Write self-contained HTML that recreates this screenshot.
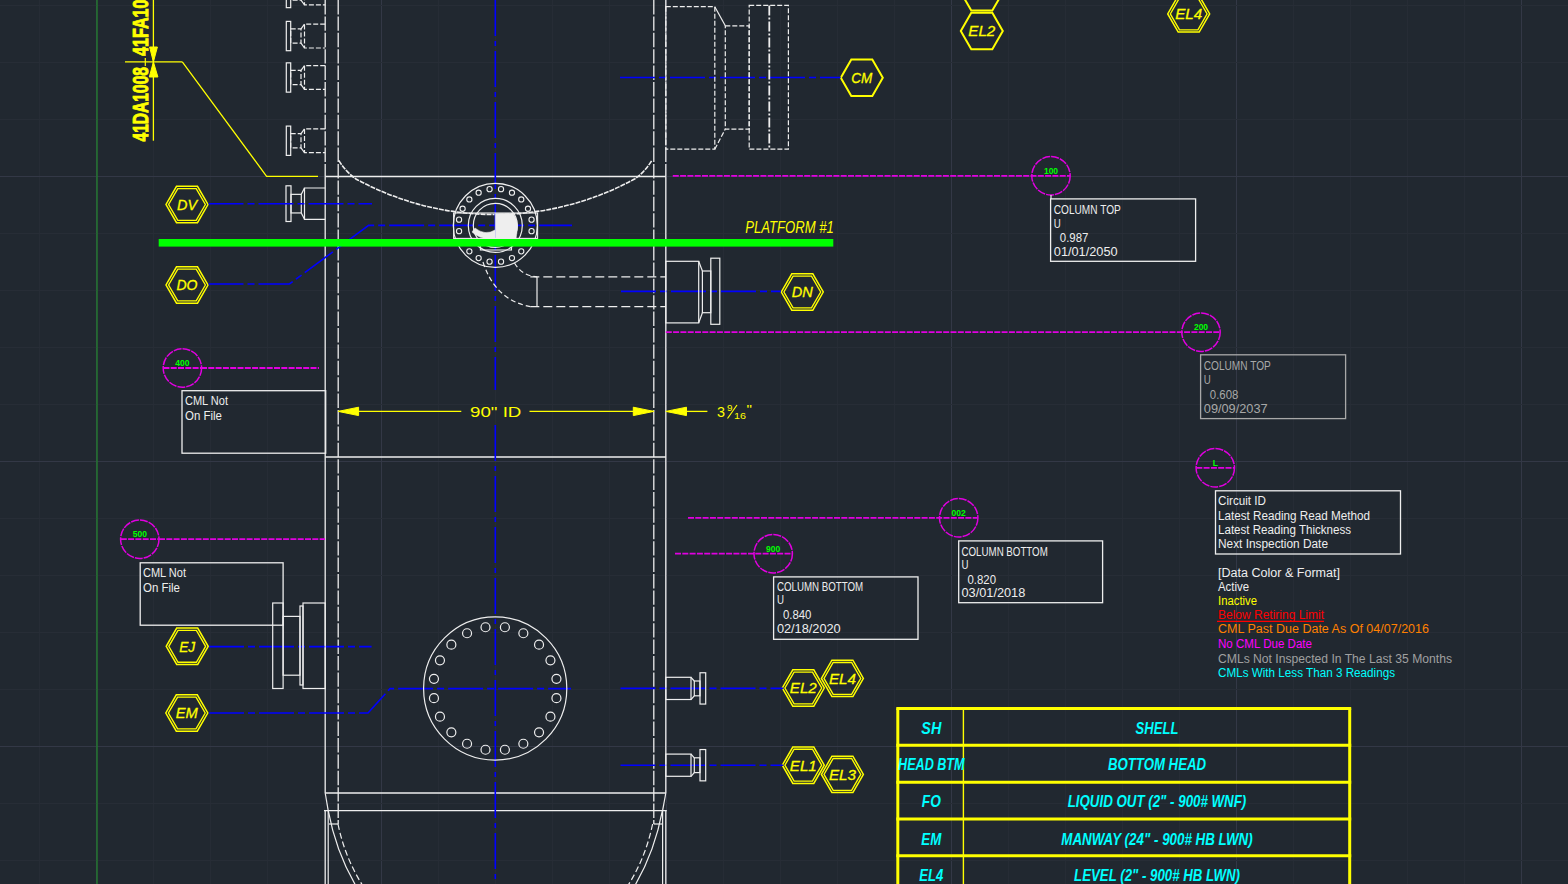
<!DOCTYPE html>
<html><head><meta charset="utf-8"><style>
html,body{margin:0;padding:0;background:#212830;width:1568px;height:884px;overflow:hidden}
</style></head><body>
<svg width="1568" height="884" viewBox="0 0 1568 884" style="display:block">
<rect width="1568" height="884" fill="#212830"/>
<line x1="39.5" y1="0" x2="39.5" y2="884" stroke="#262c35" stroke-width="1" />
<line x1="96.5" y1="0" x2="96.5" y2="884" stroke="#333846" stroke-width="1" />
<line x1="153.5" y1="0" x2="153.5" y2="884" stroke="#262c35" stroke-width="1" />
<line x1="210.5" y1="0" x2="210.5" y2="884" stroke="#262c35" stroke-width="1" />
<line x1="267.5" y1="0" x2="267.5" y2="884" stroke="#262c35" stroke-width="1" />
<line x1="324.5" y1="0" x2="324.5" y2="884" stroke="#262c35" stroke-width="1" />
<line x1="381.5" y1="0" x2="381.5" y2="884" stroke="#333846" stroke-width="1" />
<line x1="438.5" y1="0" x2="438.5" y2="884" stroke="#262c35" stroke-width="1" />
<line x1="495.5" y1="0" x2="495.5" y2="884" stroke="#262c35" stroke-width="1" />
<line x1="552.5" y1="0" x2="552.5" y2="884" stroke="#262c35" stroke-width="1" />
<line x1="609.5" y1="0" x2="609.5" y2="884" stroke="#262c35" stroke-width="1" />
<line x1="666.5" y1="0" x2="666.5" y2="884" stroke="#333846" stroke-width="1" />
<line x1="723.5" y1="0" x2="723.5" y2="884" stroke="#262c35" stroke-width="1" />
<line x1="780.5" y1="0" x2="780.5" y2="884" stroke="#262c35" stroke-width="1" />
<line x1="837.5" y1="0" x2="837.5" y2="884" stroke="#262c35" stroke-width="1" />
<line x1="894.5" y1="0" x2="894.5" y2="884" stroke="#262c35" stroke-width="1" />
<line x1="951.5" y1="0" x2="951.5" y2="884" stroke="#333846" stroke-width="1" />
<line x1="1008.5" y1="0" x2="1008.5" y2="884" stroke="#262c35" stroke-width="1" />
<line x1="1065.5" y1="0" x2="1065.5" y2="884" stroke="#262c35" stroke-width="1" />
<line x1="1122.5" y1="0" x2="1122.5" y2="884" stroke="#262c35" stroke-width="1" />
<line x1="1179.5" y1="0" x2="1179.5" y2="884" stroke="#262c35" stroke-width="1" />
<line x1="1236.5" y1="0" x2="1236.5" y2="884" stroke="#333846" stroke-width="1" />
<line x1="1293.5" y1="0" x2="1293.5" y2="884" stroke="#262c35" stroke-width="1" />
<line x1="1350.5" y1="0" x2="1350.5" y2="884" stroke="#262c35" stroke-width="1" />
<line x1="1407.5" y1="0" x2="1407.5" y2="884" stroke="#262c35" stroke-width="1" />
<line x1="1464.5" y1="0" x2="1464.5" y2="884" stroke="#262c35" stroke-width="1" />
<line x1="1521.5" y1="0" x2="1521.5" y2="884" stroke="#333846" stroke-width="1" />
<line x1="0" y1="5.5" x2="1568" y2="5.5" stroke="#272d36" stroke-width="1" />
<line x1="0" y1="62.5" x2="1568" y2="62.5" stroke="#272d36" stroke-width="1" />
<line x1="0" y1="119.5" x2="1568" y2="119.5" stroke="#272d36" stroke-width="1" />
<line x1="0" y1="176.5" x2="1568" y2="176.5" stroke="#333846" stroke-width="1" />
<line x1="0" y1="233.5" x2="1568" y2="233.5" stroke="#272d36" stroke-width="1" />
<line x1="0" y1="290.5" x2="1568" y2="290.5" stroke="#272d36" stroke-width="1" />
<line x1="0" y1="347.5" x2="1568" y2="347.5" stroke="#272d36" stroke-width="1" />
<line x1="0" y1="404.5" x2="1568" y2="404.5" stroke="#272d36" stroke-width="1" />
<line x1="0" y1="461.5" x2="1568" y2="461.5" stroke="#333846" stroke-width="1" />
<line x1="0" y1="518.5" x2="1568" y2="518.5" stroke="#272d36" stroke-width="1" />
<line x1="0" y1="575.5" x2="1568" y2="575.5" stroke="#272d36" stroke-width="1" />
<line x1="0" y1="632.5" x2="1568" y2="632.5" stroke="#272d36" stroke-width="1" />
<line x1="0" y1="689.5" x2="1568" y2="689.5" stroke="#272d36" stroke-width="1" />
<line x1="0" y1="746.5" x2="1568" y2="746.5" stroke="#333846" stroke-width="1" />
<line x1="0" y1="803.5" x2="1568" y2="803.5" stroke="#272d36" stroke-width="1" />
<line x1="0" y1="860.5" x2="1568" y2="860.5" stroke="#272d36" stroke-width="1" />
<line x1="97" y1="0" x2="97" y2="884" stroke="#237a2f" stroke-width="1.4" />
<line x1="325.2" y1="0" x2="325.2" y2="176.5" stroke="#eeeeee" stroke-width="1.3" stroke-dasharray="14.4 2" />
<line x1="665.8" y1="0" x2="665.8" y2="176.5" stroke="#eeeeee" stroke-width="1.3" stroke-dasharray="14.4 2" />
<line x1="325.2" y1="176.5" x2="325.2" y2="793" stroke="#eeeeee" stroke-width="1.3" />
<line x1="665.8" y1="176.5" x2="665.8" y2="793" stroke="#eeeeee" stroke-width="1.3" />
<line x1="338.2" y1="0" x2="338.2" y2="824" stroke="#eeeeee" stroke-width="1.3" stroke-dasharray="14.4 2" />
<line x1="653.8" y1="0" x2="653.8" y2="824" stroke="#eeeeee" stroke-width="1.3" stroke-dasharray="14.4 2" />
<line x1="325.2" y1="176.5" x2="665.8" y2="176.5" stroke="#eeeeee" stroke-width="1.3" />
<line x1="325.2" y1="457" x2="665.8" y2="457" stroke="#eeeeee" stroke-width="1.3" />
<line x1="325.2" y1="793" x2="665.8" y2="793" stroke="#eeeeee" stroke-width="1.3" />
<line x1="324" y1="810.7" x2="666.8" y2="810.7" stroke="#eeeeee" stroke-width="1.3" />
<line x1="325.2" y1="793" x2="328.2" y2="810.7" stroke="#eeeeee" stroke-width="1.2" />
<line x1="665.8" y1="793" x2="662.6" y2="810.7" stroke="#eeeeee" stroke-width="1.2" />
<line x1="325.2" y1="810.7" x2="325.2" y2="884" stroke="#eeeeee" stroke-width="1.3" />
<line x1="328.2" y1="810.7" x2="328.2" y2="884" stroke="#eeeeee" stroke-width="1.2" />
<line x1="665.8" y1="810.7" x2="665.8" y2="884" stroke="#eeeeee" stroke-width="1.3" />
<line x1="662.6" y1="810.7" x2="662.6" y2="884" stroke="#eeeeee" stroke-width="1.2" />
<line x1="329" y1="824" x2="338.2" y2="824" stroke="#eeeeee" stroke-width="1.2" />
<line x1="653.8" y1="824" x2="662" y2="824" stroke="#eeeeee" stroke-width="1.2" />
<path d="M328.2,810.7 Q336,852 356,886" fill="none" stroke="#eeeeee" stroke-width="1.2"/>
<path d="M662.4,810.7 Q654.6,852 634.6,886" fill="none" stroke="#eeeeee" stroke-width="1.2"/>
<path d="M338,824 Q345,858 363,886" fill="none" stroke="#eeeeee" stroke-width="1.2" stroke-dasharray="6 3"/>
<path d="M652.6,824 Q645.6,858 627.6,886" fill="none" stroke="#eeeeee" stroke-width="1.2" stroke-dasharray="6 3"/>
<path d="M338.7,160.4 Q346,172 355.5,178.7 A290.7,290.7 0 0 0 635.1,178.7 Q644.6,172 651.9,160.4" fill="none" stroke="#eeeeee" stroke-width="1.6" stroke-dasharray="5 1"/>
<line x1="495.3" y1="0" x2="495.3" y2="390" stroke="#0000ff" stroke-width="1.6" stroke-dasharray="36 5 5 5" />
<line x1="495.3" y1="425" x2="495.3" y2="884" stroke="#0000ff" stroke-width="1.6" stroke-dasharray="36 5 5 5" />
<line x1="153.4" y1="0" x2="153.4" y2="140.7" stroke="#ffff00" stroke-width="1.3" />
<line x1="125" y1="61.9" x2="182.3" y2="61.9" stroke="#ffff00" stroke-width="1.3" />
<line x1="145.3" y1="58" x2="145.3" y2="66" stroke="#ffff00" stroke-width="1.2" />
<polyline points="182.3,61.9 266.6,176.3 318,176.3" fill="none" stroke="#ffff00" stroke-width="1.3"/>
<polygon points="149.6,47 157.4,47 153.4,61.9" fill="#ffff00" stroke="#ffff00" stroke-width="1"/>
<polygon points="149.3,77 157.9,77 153.4,61.9" fill="#ffff00" stroke="#ffff00" stroke-width="1"/>
<text x="0" y="0" font-family="Liberation Sans" font-size="22" fill="#ffff00" text-anchor="start" font-weight="bold" font-style="normal" textLength="74.5" lengthAdjust="spacingAndGlyphs" transform="translate(148,141.5) rotate(-90)" stroke="#ffff00" stroke-width="0.9">41DA1008</text>
<text x="0" y="0" font-family="Liberation Sans" font-size="22" fill="#ffff00" text-anchor="start" font-weight="bold" font-style="normal" textLength="74.5" lengthAdjust="spacingAndGlyphs" transform="translate(148,56) rotate(-90)" stroke="#ffff00" stroke-width="0.9">41FA1008</text>
<rect x="286.3" y="-21.65" width="4.4" height="29.3" fill="none" stroke="#eeeeee" stroke-width="1.2"/>
<rect x="290.7" y="-14.15" width="10.3" height="14.3" fill="none" stroke="#eeeeee" stroke-width="1.2" stroke-dasharray="5 2"/>
<polyline points="301,-14.15 304.5,-18.95" fill="none" stroke="#eeeeee" stroke-width="1.2"/>
<polyline points="301,0.15 304.5,4.95" fill="none" stroke="#eeeeee" stroke-width="1.2"/>
<polyline points="325.2,-18.95 304.5,-18.95 304.5,4.95 325.2,4.95" fill="none" stroke="#eeeeee" stroke-width="1.2" stroke-dasharray="5 2"/>
<rect x="286.3" y="21.4" width="4.4" height="29.3" fill="none" stroke="#eeeeee" stroke-width="1.2"/>
<rect x="290.7" y="28.9" width="10.3" height="14.3" fill="none" stroke="#eeeeee" stroke-width="1.2" stroke-dasharray="5 2"/>
<polyline points="301,28.9 304.5,24.1" fill="none" stroke="#eeeeee" stroke-width="1.2"/>
<polyline points="301,43.2 304.5,48" fill="none" stroke="#eeeeee" stroke-width="1.2"/>
<polyline points="325.2,24.1 304.5,24.1 304.5,48 325.2,48" fill="none" stroke="#eeeeee" stroke-width="1.2" stroke-dasharray="5 2"/>
<rect x="286.3" y="62.85" width="4.4" height="29.3" fill="none" stroke="#eeeeee" stroke-width="1.2"/>
<rect x="290.7" y="70.35" width="10.3" height="14.3" fill="none" stroke="#eeeeee" stroke-width="1.2" stroke-dasharray="5 2"/>
<polyline points="301,70.35 304.5,65.55" fill="none" stroke="#eeeeee" stroke-width="1.2"/>
<polyline points="301,84.65 304.5,89.45" fill="none" stroke="#eeeeee" stroke-width="1.2"/>
<polyline points="325.2,65.55 304.5,65.55 304.5,89.45 325.2,89.45" fill="none" stroke="#eeeeee" stroke-width="1.2" stroke-dasharray="5 2"/>
<rect x="286.3" y="126.1" width="4.4" height="29.3" fill="none" stroke="#eeeeee" stroke-width="1.2"/>
<rect x="290.7" y="133.6" width="10.3" height="14.3" fill="none" stroke="#eeeeee" stroke-width="1.2" stroke-dasharray="5 2"/>
<polyline points="301,133.6 304.5,128.8" fill="none" stroke="#eeeeee" stroke-width="1.2"/>
<polyline points="301,147.9 304.5,152.7" fill="none" stroke="#eeeeee" stroke-width="1.2"/>
<polyline points="325.2,128.8 304.5,128.8 304.5,152.7 325.2,152.7" fill="none" stroke="#eeeeee" stroke-width="1.2" stroke-dasharray="5 2"/>
<rect x="286" y="185.8" width="5" height="35.7" fill="none" stroke="#eeeeee" stroke-width="1.2"/>
<rect x="291" y="194.35" width="10.3" height="18.6" fill="none" stroke="#eeeeee" stroke-width="1.2"/>
<polyline points="301.3,194.35 304.5,188" fill="none" stroke="#eeeeee" stroke-width="1.2"/>
<polyline points="301.3,212.95 304.5,219.3" fill="none" stroke="#eeeeee" stroke-width="1.2"/>
<polyline points="325.2,188 304.5,188 304.5,219.3 325.2,219.3" fill="none" stroke="#eeeeee" stroke-width="1.2"/>
<polygon points="208,204.5 197.5,222.69 176.5,222.69 166,204.5 176.5,186.31 197.5,186.31" fill="none" stroke="#ffff00" stroke-width="1.5"/>
<polygon points="205.4,204.5 196.2,220.43 177.8,220.43 168.6,204.5 177.8,188.57 196.2,188.57" fill="none" stroke="#ffff00" stroke-width="1.35"/>
<text x="187" y="209.9" font-family="Liberation Sans" font-size="15" fill="#ffff00" text-anchor="middle" font-weight="normal" font-style="italic" textLength="20" lengthAdjust="spacingAndGlyphs" stroke="#ffff00" stroke-width="0.3">DV</text>
<polygon points="208,285 197.5,303.19 176.5,303.19 166,285 176.5,266.81 197.5,266.81" fill="none" stroke="#ffff00" stroke-width="1.5"/>
<polygon points="205.4,285 196.2,300.93 177.8,300.93 168.6,285 177.8,269.07 196.2,269.07" fill="none" stroke="#ffff00" stroke-width="1.35"/>
<text x="187" y="290.4" font-family="Liberation Sans" font-size="15" fill="#ffff00" text-anchor="middle" font-weight="normal" font-style="italic" textLength="21" lengthAdjust="spacingAndGlyphs" stroke="#ffff00" stroke-width="0.3">DO</text>
<polygon points="208.2,646.3 197.7,664.49 176.7,664.49 166.2,646.3 176.7,628.11 197.7,628.11" fill="none" stroke="#ffff00" stroke-width="1.5"/>
<polygon points="205.6,646.3 196.4,662.23 178,662.23 168.8,646.3 178,630.37 196.4,630.37" fill="none" stroke="#ffff00" stroke-width="1.35"/>
<text x="187.2" y="651.7" font-family="Liberation Sans" font-size="15" fill="#ffff00" text-anchor="middle" font-weight="normal" font-style="italic" textLength="16" lengthAdjust="spacingAndGlyphs" stroke="#ffff00" stroke-width="0.3">EJ</text>
<polygon points="207.8,713 197.3,731.19 176.3,731.19 165.8,713 176.3,694.81 197.3,694.81" fill="none" stroke="#ffff00" stroke-width="1.5"/>
<polygon points="205.2,713 196,728.93 177.6,728.93 168.4,713 177.6,697.07 196,697.07" fill="none" stroke="#ffff00" stroke-width="1.35"/>
<text x="186.8" y="718.4" font-family="Liberation Sans" font-size="15" fill="#ffff00" text-anchor="middle" font-weight="normal" font-style="italic" textLength="22" lengthAdjust="spacingAndGlyphs" stroke="#ffff00" stroke-width="0.3">EM</text>
<polygon points="882.8,77.7 872.3,95.89 851.3,95.89 840.8,77.7 851.3,59.51 872.3,59.51" fill="none" stroke="#ffff00" stroke-width="2"/>
<text x="861.8" y="83.1" font-family="Liberation Sans" font-size="15" fill="#ffff00" text-anchor="middle" font-weight="normal" font-style="italic" textLength="21" lengthAdjust="spacingAndGlyphs" stroke="#ffff00" stroke-width="0.3">CM</text>
<polygon points="823.3,292 812.8,310.19 791.8,310.19 781.3,292 791.8,273.81 812.8,273.81" fill="none" stroke="#ffff00" stroke-width="1.5"/>
<polygon points="820.7,292 811.5,307.93 793.1,307.93 783.9,292 793.1,276.07 811.5,276.07" fill="none" stroke="#ffff00" stroke-width="1.35"/>
<text x="802.3" y="297.4" font-family="Liberation Sans" font-size="15" fill="#ffff00" text-anchor="middle" font-weight="normal" font-style="italic" textLength="21" lengthAdjust="spacingAndGlyphs" stroke="#ffff00" stroke-width="0.3">DN</text>
<polygon points="824.3,688 813.8,706.19 792.8,706.19 782.3,688 792.8,669.81 813.8,669.81" fill="none" stroke="#ffff00" stroke-width="1.5"/>
<polygon points="821.7,688 812.5,703.93 794.1,703.93 784.9,688 794.1,672.07 812.5,672.07" fill="none" stroke="#ffff00" stroke-width="1.35"/>
<text x="803.3" y="693.4" font-family="Liberation Sans" font-size="15" fill="#ffff00" text-anchor="middle" font-weight="normal" font-style="italic" textLength="27" lengthAdjust="spacingAndGlyphs" stroke="#ffff00" stroke-width="0.3">EL2</text>
<polygon points="863.4,678.4 852.9,696.59 831.9,696.59 821.4,678.4 831.9,660.21 852.9,660.21" fill="none" stroke="#ffff00" stroke-width="1.5"/>
<polygon points="860.8,678.4 851.6,694.33 833.2,694.33 824,678.4 833.2,662.47 851.6,662.47" fill="none" stroke="#ffff00" stroke-width="1.35"/>
<text x="842.4" y="683.8" font-family="Liberation Sans" font-size="15" fill="#ffff00" text-anchor="middle" font-weight="normal" font-style="italic" textLength="27" lengthAdjust="spacingAndGlyphs" stroke="#ffff00" stroke-width="0.3">EL4</text>
<polygon points="824.3,765.2 813.8,783.39 792.8,783.39 782.3,765.2 792.8,747.01 813.8,747.01" fill="none" stroke="#ffff00" stroke-width="1.5"/>
<polygon points="821.7,765.2 812.5,781.13 794.1,781.13 784.9,765.2 794.1,749.27 812.5,749.27" fill="none" stroke="#ffff00" stroke-width="1.35"/>
<text x="803.3" y="770.6" font-family="Liberation Sans" font-size="15" fill="#ffff00" text-anchor="middle" font-weight="normal" font-style="italic" textLength="27" lengthAdjust="spacingAndGlyphs" stroke="#ffff00" stroke-width="0.3">EL1</text>
<polygon points="863.4,774.4 852.9,792.59 831.9,792.59 821.4,774.4 831.9,756.21 852.9,756.21" fill="none" stroke="#ffff00" stroke-width="1.5"/>
<polygon points="860.8,774.4 851.6,790.33 833.2,790.33 824,774.4 833.2,758.47 851.6,758.47" fill="none" stroke="#ffff00" stroke-width="1.35"/>
<text x="842.4" y="779.8" font-family="Liberation Sans" font-size="15" fill="#ffff00" text-anchor="middle" font-weight="normal" font-style="italic" textLength="27" lengthAdjust="spacingAndGlyphs" stroke="#ffff00" stroke-width="0.3">EL3</text>
<polygon points="1002.8,31 992.3,49.19 971.3,49.19 960.8,31 971.3,12.81 992.3,12.81" fill="none" stroke="#ffff00" stroke-width="2"/>
<text x="981.8" y="36.4" font-family="Liberation Sans" font-size="15" fill="#ffff00" text-anchor="middle" font-weight="normal" font-style="italic" textLength="27" lengthAdjust="spacingAndGlyphs" stroke="#ffff00" stroke-width="0.3">EL2</text>
<polygon points="1002.8,-7.6 992.3,10.59 971.3,10.59 960.8,-7.6 971.3,-25.79 992.3,-25.79" fill="none" stroke="#ffff00" stroke-width="2"/>
<polygon points="1209.7,13.9 1199.2,32.09 1178.2,32.09 1167.7,13.9 1178.2,-4.29 1199.2,-4.29" fill="none" stroke="#ffff00" stroke-width="1.5"/>
<polygon points="1207.1,13.9 1197.9,29.83 1179.5,29.83 1170.3,13.9 1179.5,-2.03 1197.9,-2.03" fill="none" stroke="#ffff00" stroke-width="1.35"/>
<text x="1188.7" y="19.3" font-family="Liberation Sans" font-size="15" fill="#ffff00" text-anchor="middle" font-weight="normal" font-style="italic" textLength="27" lengthAdjust="spacingAndGlyphs" stroke="#ffff00" stroke-width="0.3">EL4</text>
<line x1="208.5" y1="203.7" x2="372" y2="203.7" stroke="#0000ff" stroke-width="1.6" stroke-dasharray="35 4 7 4" />
<polyline points="208.5,284 289.4,284 368.6,225.4 572,225.4" fill="none" stroke="#0000ff" stroke-width="1.6" stroke-dasharray="35 4 7 4"/>
<line x1="620" y1="77.5" x2="840.7" y2="77.5" stroke="#0000ff" stroke-width="1.6" stroke-dasharray="35 4 7 4" />
<line x1="621" y1="291.4" x2="781" y2="291.4" stroke="#0000ff" stroke-width="1.6" stroke-dasharray="35 4 7 4" />
<line x1="209" y1="646.6" x2="371.6" y2="646.6" stroke="#0000ff" stroke-width="1.6" stroke-dasharray="35 4 7 4" />
<polyline points="209,713 368,713 390,688.6 571,688.6" fill="none" stroke="#0000ff" stroke-width="1.6" stroke-dasharray="35 4 7 4"/>
<line x1="620.5" y1="688.4" x2="783" y2="688.4" stroke="#0000ff" stroke-width="1.6" stroke-dasharray="35 4 7 4" />
<line x1="620.5" y1="765.2" x2="783" y2="765.2" stroke="#0000ff" stroke-width="1.6" stroke-dasharray="35 4 7 4" />
<rect x="665.8" y="6.7" width="49" height="142.5" fill="none" stroke="#eeeeee" stroke-width="1.2" stroke-dasharray="5 2"/>
<polyline points="714.8,6.7 725.3,25.8" fill="none" stroke="#eeeeee" stroke-width="1.2"/>
<polyline points="714.8,149.2 725.3,129.1" fill="none" stroke="#eeeeee" stroke-width="1.2" stroke-dasharray="5 2"/>
<rect x="725.3" y="25.8" width="23.9" height="103.3" fill="none" stroke="#eeeeee" stroke-width="1.2" stroke-dasharray="5 2"/>
<rect x="749.2" y="5.4" width="39.2" height="143.8" fill="none" stroke="#eeeeee" stroke-width="1.2" stroke-dasharray="5 2"/>
<line x1="769.3" y1="5.4" x2="769.3" y2="149.2" stroke="#eeeeee" stroke-width="1.8" stroke-dasharray="10 2 2 2" />
<rect x="665.8" y="261.3" width="32.9" height="61.6" fill="none" stroke="#eeeeee" stroke-width="1.2"/>
<polyline points="698.7,261.3 702.4,271" fill="none" stroke="#eeeeee" stroke-width="1.2"/>
<polyline points="698.7,322.9 702.4,312.7" fill="none" stroke="#eeeeee" stroke-width="1.2"/>
<rect x="702.4" y="271" width="8.4" height="41.7" fill="none" stroke="#eeeeee" stroke-width="1.2"/>
<rect x="710.8" y="258.2" width="9" height="66.1" fill="none" stroke="#eeeeee" stroke-width="1.2"/>
<line x1="530.3" y1="276.8" x2="665.8" y2="276.8" stroke="#eeeeee" stroke-width="1.3" stroke-dasharray="9 4" />
<line x1="530.3" y1="306.6" x2="665.8" y2="306.6" stroke="#eeeeee" stroke-width="1.3" stroke-dasharray="9 4" />
<line x1="537" y1="276.8" x2="537" y2="306.6" stroke="#eeeeee" stroke-width="1.2" />
<path d="M514.5,263 Q522,276 537,276.8" fill="none" stroke="#eeeeee" stroke-width="1.2" stroke-dasharray="5 3"/>
<path d="M483,262 Q495,300 530.3,306.6" fill="none" stroke="#eeeeee" stroke-width="1.2" stroke-dasharray="5 3"/>
<rect x="665.8" y="677.3" width="25.2" height="22.2" fill="none" stroke="#eeeeee" stroke-width="1.2"/>
<polyline points="691,677.3 694.3,681" fill="none" stroke="#eeeeee" stroke-width="1.2"/>
<polyline points="691,699.5 694.3,695.8" fill="none" stroke="#eeeeee" stroke-width="1.2"/>
<rect x="694.3" y="681" width="5.7" height="14.8" fill="none" stroke="#eeeeee" stroke-width="1.2"/>
<rect x="700" y="672.75" width="5.7" height="31.3" fill="none" stroke="#eeeeee" stroke-width="1.2"/>
<rect x="665.8" y="754.1" width="25.2" height="22.2" fill="none" stroke="#eeeeee" stroke-width="1.2"/>
<polyline points="691,754.1 694.3,757.8" fill="none" stroke="#eeeeee" stroke-width="1.2"/>
<polyline points="691,776.3 694.3,772.6" fill="none" stroke="#eeeeee" stroke-width="1.2"/>
<rect x="694.3" y="757.8" width="5.7" height="14.8" fill="none" stroke="#eeeeee" stroke-width="1.2"/>
<rect x="700" y="749.55" width="5.7" height="31.3" fill="none" stroke="#eeeeee" stroke-width="1.2"/>
<rect x="272.7" y="603" width="10.4" height="85.5" fill="none" stroke="#eeeeee" stroke-width="1.2"/>
<rect x="283.1" y="616.4" width="16.9" height="58.8" fill="none" stroke="#eeeeee" stroke-width="1.2"/>
<rect x="300" y="606" width="3" height="79" fill="none" stroke="#eeeeee" stroke-width="1.2"/>
<rect x="303" y="603" width="22.2" height="85.5" fill="none" stroke="#eeeeee" stroke-width="1.2"/>
<circle cx="495.3" cy="225.4" r="42" fill="none" stroke="#eeeeee" stroke-width="1.2"/>
<circle cx="495.3" cy="225.4" r="27" fill="none" stroke="#eeeeee" stroke-width="1.2"/>
<circle cx="495.3" cy="225.4" r="22" fill="none" stroke="#eeeeee" stroke-width="1.2"/>
<circle cx="501.04" cy="189.15" r="2.6" fill="none" stroke="#eeeeee" stroke-width="1.1"/>
<circle cx="511.96" cy="192.7" r="2.6" fill="none" stroke="#eeeeee" stroke-width="1.1"/>
<circle cx="521.25" cy="199.45" r="2.6" fill="none" stroke="#eeeeee" stroke-width="1.1"/>
<circle cx="528" cy="208.74" r="2.6" fill="none" stroke="#eeeeee" stroke-width="1.1"/>
<circle cx="531.55" cy="219.66" r="2.6" fill="none" stroke="#eeeeee" stroke-width="1.1"/>
<circle cx="531.55" cy="231.14" r="2.6" fill="none" stroke="#eeeeee" stroke-width="1.1"/>
<circle cx="528" cy="242.06" r="2.6" fill="none" stroke="#eeeeee" stroke-width="1.1"/>
<circle cx="521.25" cy="251.35" r="2.6" fill="none" stroke="#eeeeee" stroke-width="1.1"/>
<circle cx="511.96" cy="258.1" r="2.6" fill="none" stroke="#eeeeee" stroke-width="1.1"/>
<circle cx="501.04" cy="261.65" r="2.6" fill="none" stroke="#eeeeee" stroke-width="1.1"/>
<circle cx="489.56" cy="261.65" r="2.6" fill="none" stroke="#eeeeee" stroke-width="1.1"/>
<circle cx="478.64" cy="258.1" r="2.6" fill="none" stroke="#eeeeee" stroke-width="1.1"/>
<circle cx="469.35" cy="251.35" r="2.6" fill="none" stroke="#eeeeee" stroke-width="1.1"/>
<circle cx="462.6" cy="242.06" r="2.6" fill="none" stroke="#eeeeee" stroke-width="1.1"/>
<circle cx="459.05" cy="231.14" r="2.6" fill="none" stroke="#eeeeee" stroke-width="1.1"/>
<circle cx="459.05" cy="219.66" r="2.6" fill="none" stroke="#eeeeee" stroke-width="1.1"/>
<circle cx="462.6" cy="208.74" r="2.6" fill="none" stroke="#eeeeee" stroke-width="1.1"/>
<circle cx="469.35" cy="199.45" r="2.6" fill="none" stroke="#eeeeee" stroke-width="1.1"/>
<circle cx="478.64" cy="192.7" r="2.6" fill="none" stroke="#eeeeee" stroke-width="1.1"/>
<circle cx="489.56" cy="189.15" r="2.6" fill="none" stroke="#eeeeee" stroke-width="1.1"/>
<rect x="453.6" y="213" width="84" height="25.4" fill="none" stroke="#eeeeee" stroke-width="1.1"/>
<path d="M495.3,213.5 L513,213.5 Q518,220 517.5,228 L516,239 L495.3,239 Z" fill="#eeeeee" stroke="#eeeeee" stroke-width="0.5"/>
<path d="M472,232 Q480,240 495,239 L495,230 Q485,236 475,228 Z" fill="#eeeeee" stroke="#eeeeee" stroke-width="0.5"/>
<rect x="480.4" y="239" width="31.1" height="11" fill="none" stroke="#eeeeee" stroke-width="1.1"/>
<circle cx="495.2" cy="688.5" r="71.6" fill="none" stroke="#eeeeee" stroke-width="1.2"/>
<circle cx="504.9" cy="627.26" r="4.5" fill="none" stroke="#eeeeee" stroke-width="1.2"/>
<circle cx="523.35" cy="633.26" r="4.5" fill="none" stroke="#eeeeee" stroke-width="1.2"/>
<circle cx="539.04" cy="644.66" r="4.5" fill="none" stroke="#eeeeee" stroke-width="1.2"/>
<circle cx="550.44" cy="660.35" r="4.5" fill="none" stroke="#eeeeee" stroke-width="1.2"/>
<circle cx="556.44" cy="678.8" r="4.5" fill="none" stroke="#eeeeee" stroke-width="1.2"/>
<circle cx="556.44" cy="698.2" r="4.5" fill="none" stroke="#eeeeee" stroke-width="1.2"/>
<circle cx="550.44" cy="716.65" r="4.5" fill="none" stroke="#eeeeee" stroke-width="1.2"/>
<circle cx="539.04" cy="732.34" r="4.5" fill="none" stroke="#eeeeee" stroke-width="1.2"/>
<circle cx="523.35" cy="743.74" r="4.5" fill="none" stroke="#eeeeee" stroke-width="1.2"/>
<circle cx="504.9" cy="749.74" r="4.5" fill="none" stroke="#eeeeee" stroke-width="1.2"/>
<circle cx="485.5" cy="749.74" r="4.5" fill="none" stroke="#eeeeee" stroke-width="1.2"/>
<circle cx="467.05" cy="743.74" r="4.5" fill="none" stroke="#eeeeee" stroke-width="1.2"/>
<circle cx="451.36" cy="732.34" r="4.5" fill="none" stroke="#eeeeee" stroke-width="1.2"/>
<circle cx="439.96" cy="716.65" r="4.5" fill="none" stroke="#eeeeee" stroke-width="1.2"/>
<circle cx="433.96" cy="698.2" r="4.5" fill="none" stroke="#eeeeee" stroke-width="1.2"/>
<circle cx="433.96" cy="678.8" r="4.5" fill="none" stroke="#eeeeee" stroke-width="1.2"/>
<circle cx="439.96" cy="660.35" r="4.5" fill="none" stroke="#eeeeee" stroke-width="1.2"/>
<circle cx="451.36" cy="644.66" r="4.5" fill="none" stroke="#eeeeee" stroke-width="1.2"/>
<circle cx="467.05" cy="633.26" r="4.5" fill="none" stroke="#eeeeee" stroke-width="1.2"/>
<circle cx="485.5" cy="627.26" r="4.5" fill="none" stroke="#eeeeee" stroke-width="1.2"/>
<rect x="158.7" y="239" width="674.6" height="7.6" fill="#00ff00"/>
<text x="745.3" y="233.3" font-family="Liberation Sans" font-size="16" fill="#ffff00" text-anchor="start" font-weight="normal" font-style="italic" textLength="88.4" lengthAdjust="spacingAndGlyphs" >PLATFORM #1</text>
<line x1="338.2" y1="411.4" x2="461.3" y2="411.4" stroke="#ffff00" stroke-width="1.3" />
<line x1="529.5" y1="411.4" x2="653.8" y2="411.4" stroke="#ffff00" stroke-width="1.3" />
<polygon points="338.2,411.4 358.6,407.2 358.6,415.6" fill="#ffff00" stroke="#ffff00" stroke-width="1"/>
<polygon points="653.8,411.4 633.3,407.2 633.3,415.6" fill="#ffff00" stroke="#ffff00" stroke-width="1"/>
<polygon points="665.8,411.4 686.5,407.2 686.5,415.6" fill="#ffff00" stroke="#ffff00" stroke-width="1"/>
<line x1="686.5" y1="411.4" x2="707.4" y2="411.4" stroke="#ffff00" stroke-width="1.3" />
<text x="470" y="416.5" font-family="Liberation Sans" font-size="15" fill="#ffff00" text-anchor="start" font-weight="normal" font-style="normal" textLength="51.4" lengthAdjust="spacingAndGlyphs" >90" ID</text>
<text x="717" y="416.5" font-family="Liberation Sans" font-size="15" fill="#ffff00" text-anchor="start" font-weight="normal" font-style="normal" textLength="8" lengthAdjust="spacingAndGlyphs" >3</text>
<text x="727" y="411" font-family="Liberation Sans" font-size="8.5" fill="#ffff00" text-anchor="start" font-weight="normal" font-style="normal" textLength="5.5" lengthAdjust="spacingAndGlyphs" >9</text>
<line x1="727.5" y1="418.5" x2="737" y2="405" stroke="#ffff00" stroke-width="1.2" />
<text x="734" y="419" font-family="Liberation Sans" font-size="8.5" fill="#ffff00" text-anchor="start" font-weight="normal" font-style="normal" textLength="12" lengthAdjust="spacingAndGlyphs" >16</text>
<text x="746.5" y="413.5" font-family="Liberation Sans" font-size="12" fill="#ffff00" text-anchor="start" font-weight="normal" font-style="normal" textLength="5.5" lengthAdjust="spacingAndGlyphs" >"</text>
<circle cx="1051" cy="175.8" r="19.2" fill="none" stroke="#e000e0" stroke-width="1.5" stroke-dasharray="8 1"/>
<line x1="672.8" y1="175.8" x2="1070" y2="175.8" stroke="#e000e0" stroke-width="1.8" stroke-dasharray="6 1.3" />
<text x="1051" y="173.8" font-family="Liberation Sans" font-size="8.5" fill="#00ff00" text-anchor="middle" font-weight="bold" font-style="normal" >100</text>
<line x1="1051" y1="195" x2="1051" y2="199" stroke="#eeeeee" stroke-width="1.2" />
<rect x="1050.6" y="198.9" width="145" height="62.4" fill="none" stroke="#eeeeee" stroke-width="1.3"/>
<text x="1053.8" y="213.8" font-family="Liberation Sans" font-size="12" fill="#eeeeee" text-anchor="start" font-weight="normal" font-style="normal" textLength="67" lengthAdjust="spacingAndGlyphs" >COLUMN TOP</text>
<text x="1053.8" y="228" font-family="Liberation Sans" font-size="12" fill="#eeeeee" text-anchor="start" font-weight="normal" font-style="normal" textLength="7" lengthAdjust="spacingAndGlyphs" >U</text>
<text x="1059.8" y="242.3" font-family="Liberation Sans" font-size="12" fill="#eeeeee" text-anchor="start" font-weight="normal" font-style="normal" textLength="28.5" lengthAdjust="spacingAndGlyphs" >0.987</text>
<text x="1053.8" y="255.6" font-family="Liberation Sans" font-size="12" fill="#eeeeee" text-anchor="start" font-weight="normal" font-style="normal" textLength="63.8" lengthAdjust="spacingAndGlyphs" >01/01/2050</text>
<circle cx="1201" cy="332.2" r="19.2" fill="none" stroke="#e000e0" stroke-width="1.5" stroke-dasharray="8 1"/>
<line x1="665.8" y1="332.2" x2="1220" y2="332.2" stroke="#e000e0" stroke-width="1.8" stroke-dasharray="6 1.3" />
<text x="1201" y="330.2" font-family="Liberation Sans" font-size="8.5" fill="#00ff00" text-anchor="middle" font-weight="bold" font-style="normal" >200</text>
<rect x="1200.6" y="354.8" width="145" height="63.8" fill="none" stroke="#a8a8a8" stroke-width="1.3"/>
<text x="1203.8" y="369.7" font-family="Liberation Sans" font-size="12" fill="#a8a8a8" text-anchor="start" font-weight="normal" font-style="normal" textLength="67" lengthAdjust="spacingAndGlyphs" >COLUMN TOP</text>
<text x="1203.8" y="384" font-family="Liberation Sans" font-size="12" fill="#a8a8a8" text-anchor="start" font-weight="normal" font-style="normal" textLength="7" lengthAdjust="spacingAndGlyphs" >U</text>
<text x="1209.8" y="399" font-family="Liberation Sans" font-size="12" fill="#a8a8a8" text-anchor="start" font-weight="normal" font-style="normal" textLength="28.5" lengthAdjust="spacingAndGlyphs" >0.608</text>
<text x="1203.8" y="413" font-family="Liberation Sans" font-size="12" fill="#a8a8a8" text-anchor="start" font-weight="normal" font-style="normal" textLength="63.8" lengthAdjust="spacingAndGlyphs" >09/09/2037</text>
<circle cx="182.4" cy="368" r="19.2" fill="none" stroke="#e000e0" stroke-width="1.5" stroke-dasharray="8 1"/>
<line x1="163.4" y1="368" x2="201.4" y2="368" stroke="#e000e0" stroke-width="1.8" stroke-dasharray="6 1.3" />
<text x="182.4" y="366" font-family="Liberation Sans" font-size="8.5" fill="#00ff00" text-anchor="middle" font-weight="bold" font-style="normal" >400</text>
<line x1="201" y1="368" x2="319" y2="368" stroke="#e000e0" stroke-width="1.8" stroke-dasharray="6 1.3" />
<rect x="182" y="390.7" width="143.7" height="62.5" fill="none" stroke="#eeeeee" stroke-width="1.3"/>
<text x="185" y="405.4" font-family="Liberation Sans" font-size="12" fill="#eeeeee" text-anchor="start" font-weight="normal" font-style="normal" textLength="43" lengthAdjust="spacingAndGlyphs" >CML Not</text>
<text x="185" y="420" font-family="Liberation Sans" font-size="12" fill="#eeeeee" text-anchor="start" font-weight="normal" font-style="normal" textLength="37" lengthAdjust="spacingAndGlyphs" >On File</text>
<circle cx="139.8" cy="539.2" r="19.2" fill="none" stroke="#e000e0" stroke-width="1.5" stroke-dasharray="8 1"/>
<line x1="120.8" y1="539.2" x2="158.8" y2="539.2" stroke="#e000e0" stroke-width="1.8" stroke-dasharray="6 1.3" />
<text x="139.8" y="537.2" font-family="Liberation Sans" font-size="8.5" fill="#00ff00" text-anchor="middle" font-weight="bold" font-style="normal" >500</text>
<line x1="159" y1="539.2" x2="325" y2="539.2" stroke="#e000e0" stroke-width="1.8" stroke-dasharray="6 1.3" />
<rect x="140.2" y="562.8" width="142.9" height="62.4" fill="none" stroke="#eeeeee" stroke-width="1.3"/>
<text x="143" y="577.3" font-family="Liberation Sans" font-size="12" fill="#eeeeee" text-anchor="start" font-weight="normal" font-style="normal" textLength="43" lengthAdjust="spacingAndGlyphs" >CML Not</text>
<text x="143" y="591.5" font-family="Liberation Sans" font-size="12" fill="#eeeeee" text-anchor="start" font-weight="normal" font-style="normal" textLength="37" lengthAdjust="spacingAndGlyphs" >On File</text>
<circle cx="773.2" cy="553.7" r="19.2" fill="none" stroke="#e000e0" stroke-width="1.5" stroke-dasharray="8 1"/>
<line x1="675" y1="553.7" x2="792.2" y2="553.7" stroke="#e000e0" stroke-width="1.8" stroke-dasharray="6 1.3" />
<text x="773.2" y="551.7" font-family="Liberation Sans" font-size="8.5" fill="#00ff00" text-anchor="middle" font-weight="bold" font-style="normal" >900</text>
<rect x="773.6" y="576.9" width="144.4" height="62.4" fill="none" stroke="#eeeeee" stroke-width="1.3"/>
<text x="776.9" y="590.5" font-family="Liberation Sans" font-size="12" fill="#eeeeee" text-anchor="start" font-weight="normal" font-style="normal" textLength="86.3" lengthAdjust="spacingAndGlyphs" >COLUMN BOTTOM</text>
<text x="776.9" y="604.4" font-family="Liberation Sans" font-size="12" fill="#eeeeee" text-anchor="start" font-weight="normal" font-style="normal" textLength="7" lengthAdjust="spacingAndGlyphs" >U</text>
<text x="782.9" y="619.4" font-family="Liberation Sans" font-size="12" fill="#eeeeee" text-anchor="start" font-weight="normal" font-style="normal" textLength="28.5" lengthAdjust="spacingAndGlyphs" >0.840</text>
<text x="776.9" y="633.4" font-family="Liberation Sans" font-size="12" fill="#eeeeee" text-anchor="start" font-weight="normal" font-style="normal" textLength="63.8" lengthAdjust="spacingAndGlyphs" >02/18/2020</text>
<circle cx="958.7" cy="517.8" r="19.2" fill="none" stroke="#e000e0" stroke-width="1.5" stroke-dasharray="8 1"/>
<line x1="688" y1="517.8" x2="977.7" y2="517.8" stroke="#e000e0" stroke-width="1.8" stroke-dasharray="6 1.3" />
<text x="958.7" y="515.8" font-family="Liberation Sans" font-size="8.5" fill="#00ff00" text-anchor="middle" font-weight="bold" font-style="normal" >002</text>
<rect x="958.7" y="540.9" width="143.9" height="61.8" fill="none" stroke="#eeeeee" stroke-width="1.3"/>
<text x="961.5" y="555.9" font-family="Liberation Sans" font-size="12" fill="#eeeeee" text-anchor="start" font-weight="normal" font-style="normal" textLength="86.3" lengthAdjust="spacingAndGlyphs" >COLUMN BOTTOM</text>
<text x="961.5" y="569.4" font-family="Liberation Sans" font-size="12" fill="#eeeeee" text-anchor="start" font-weight="normal" font-style="normal" textLength="7" lengthAdjust="spacingAndGlyphs" >U</text>
<text x="967.5" y="583.7" font-family="Liberation Sans" font-size="12" fill="#eeeeee" text-anchor="start" font-weight="normal" font-style="normal" textLength="28.5" lengthAdjust="spacingAndGlyphs" >0.820</text>
<text x="961.5" y="597.3" font-family="Liberation Sans" font-size="12" fill="#eeeeee" text-anchor="start" font-weight="normal" font-style="normal" textLength="63.8" lengthAdjust="spacingAndGlyphs" >03/01/2018</text>
<circle cx="1215.3" cy="467.8" r="19.2" fill="none" stroke="#e000e0" stroke-width="1.5" stroke-dasharray="8 1"/>
<line x1="1196.3" y1="467.8" x2="1234.3" y2="467.8" stroke="#e000e0" stroke-width="1.8" stroke-dasharray="6 1.3" />
<text x="1215.3" y="465.8" font-family="Liberation Sans" font-size="8.5" fill="#00ff00" text-anchor="middle" font-weight="bold" font-style="normal" >L</text>
<rect x="1215.5" y="490.8" width="185" height="63.2" fill="none" stroke="#eeeeee" stroke-width="1.3"/>
<text x="1218" y="505.2" font-family="Liberation Sans" font-size="12" fill="#eeeeee" text-anchor="start" font-weight="normal" font-style="normal" textLength="48" lengthAdjust="spacingAndGlyphs" >Circuit ID</text>
<text x="1218" y="519.7" font-family="Liberation Sans" font-size="12" fill="#eeeeee" text-anchor="start" font-weight="normal" font-style="normal" textLength="152" lengthAdjust="spacingAndGlyphs" >Latest Reading Read Method</text>
<text x="1218" y="533.7" font-family="Liberation Sans" font-size="12" fill="#eeeeee" text-anchor="start" font-weight="normal" font-style="normal" textLength="133" lengthAdjust="spacingAndGlyphs" >Latest Reading Thickness</text>
<text x="1218" y="548.3" font-family="Liberation Sans" font-size="12" fill="#eeeeee" text-anchor="start" font-weight="normal" font-style="normal" textLength="110" lengthAdjust="spacingAndGlyphs" >Next Inspection Date</text>
<text x="1218" y="577" font-family="Liberation Sans" font-size="12" fill="#eeeeee" text-anchor="start" font-weight="normal" font-style="normal" textLength="122" lengthAdjust="spacingAndGlyphs" >[Data Color &amp; Format]</text>
<text x="1218" y="590.7" font-family="Liberation Sans" font-size="12" fill="#eeeeee" text-anchor="start" font-weight="normal" font-style="normal" textLength="31" lengthAdjust="spacingAndGlyphs" >Active</text>
<text x="1218" y="604.8" font-family="Liberation Sans" font-size="12" fill="#ffff00" text-anchor="start" font-weight="normal" font-style="normal" textLength="39" lengthAdjust="spacingAndGlyphs" >Inactive</text>
<text x="1218" y="618.8" font-family="Liberation Sans" font-size="12" fill="#ff0000" text-anchor="start" font-weight="normal" font-style="normal" textLength="106" lengthAdjust="spacingAndGlyphs" >Below Retiring Limit</text>
<text x="1218" y="633.3" font-family="Liberation Sans" font-size="12" fill="#ff8000" text-anchor="start" font-weight="normal" font-style="normal" textLength="211" lengthAdjust="spacingAndGlyphs" >CML Past Due Date As Of 04/07/2016</text>
<text x="1218" y="647.9" font-family="Liberation Sans" font-size="12" fill="#ff00ff" text-anchor="start" font-weight="normal" font-style="normal" textLength="94" lengthAdjust="spacingAndGlyphs" >No CML Due Date</text>
<text x="1218" y="662.5" font-family="Liberation Sans" font-size="12" fill="#a0a0a0" text-anchor="start" font-weight="normal" font-style="normal" textLength="234" lengthAdjust="spacingAndGlyphs" >CMLs Not Inspected In The Last 35 Months</text>
<text x="1218" y="676.9" font-family="Liberation Sans" font-size="12" fill="#00ffff" text-anchor="start" font-weight="normal" font-style="normal" textLength="177" lengthAdjust="spacingAndGlyphs" >CMLs With Less Than 3 Readings</text>
<line x1="1217" y1="621.3" x2="1324" y2="621.3" stroke="#ff0000" stroke-width="1.2" />
<line x1="896.3" y1="708.4" x2="1351.2" y2="708.4" stroke="#ffff00" stroke-width="3" />
<line x1="896.3" y1="745.2" x2="1351.2" y2="745.2" stroke="#ffff00" stroke-width="3" />
<line x1="896.3" y1="782.2" x2="1351.2" y2="782.2" stroke="#ffff00" stroke-width="3" />
<line x1="896.3" y1="819" x2="1351.2" y2="819" stroke="#ffff00" stroke-width="3" />
<line x1="896.3" y1="855.8" x2="1351.2" y2="855.8" stroke="#ffff00" stroke-width="3" />
<line x1="897.8" y1="708.4" x2="897.8" y2="884" stroke="#ffff00" stroke-width="3" />
<line x1="1349.7" y1="708.4" x2="1349.7" y2="884" stroke="#ffff00" stroke-width="3" />
<line x1="963.4" y1="708.4" x2="963.4" y2="884" stroke="#ffff00" stroke-width="1.4" />
<text x="931.3" y="733.5" font-family="Liberation Sans" font-size="16.5" fill="#00ffff" text-anchor="middle" font-weight="bold" font-style="italic" textLength="20" lengthAdjust="spacingAndGlyphs" >SH</text>
<text x="1157" y="733.5" font-family="Liberation Sans" font-size="16.5" fill="#00ffff" text-anchor="middle" font-weight="bold" font-style="italic" textLength="42.8" lengthAdjust="spacingAndGlyphs" >SHELL</text>
<text x="931.3" y="770.3" font-family="Liberation Sans" font-size="16.5" fill="#00ffff" text-anchor="middle" font-weight="bold" font-style="italic" textLength="66.5" lengthAdjust="spacingAndGlyphs" >HEAD BTM</text>
<text x="1157" y="770.3" font-family="Liberation Sans" font-size="16.5" fill="#00ffff" text-anchor="middle" font-weight="bold" font-style="italic" textLength="98" lengthAdjust="spacingAndGlyphs" >BOTTOM HEAD</text>
<text x="931.3" y="807.3" font-family="Liberation Sans" font-size="16.5" fill="#00ffff" text-anchor="middle" font-weight="bold" font-style="italic" textLength="19" lengthAdjust="spacingAndGlyphs" >FO</text>
<text x="1157" y="807.3" font-family="Liberation Sans" font-size="16.5" fill="#00ffff" text-anchor="middle" font-weight="bold" font-style="italic" textLength="178.6" lengthAdjust="spacingAndGlyphs" >LIQUID OUT (2" - 900# WNF)</text>
<text x="931.3" y="844.7" font-family="Liberation Sans" font-size="16.5" fill="#00ffff" text-anchor="middle" font-weight="bold" font-style="italic" textLength="20" lengthAdjust="spacingAndGlyphs" >EM</text>
<text x="1157" y="844.7" font-family="Liberation Sans" font-size="16.5" fill="#00ffff" text-anchor="middle" font-weight="bold" font-style="italic" textLength="191.4" lengthAdjust="spacingAndGlyphs" >MANWAY (24" - 900# HB LWN)</text>
<text x="931.3" y="881" font-family="Liberation Sans" font-size="16.5" fill="#00ffff" text-anchor="middle" font-weight="bold" font-style="italic" textLength="24" lengthAdjust="spacingAndGlyphs" >EL4</text>
<text x="1157" y="881" font-family="Liberation Sans" font-size="16.5" fill="#00ffff" text-anchor="middle" font-weight="bold" font-style="italic" textLength="165.8" lengthAdjust="spacingAndGlyphs" >LEVEL (2" - 900# HB LWN)</text>
</svg>
</body></html>
